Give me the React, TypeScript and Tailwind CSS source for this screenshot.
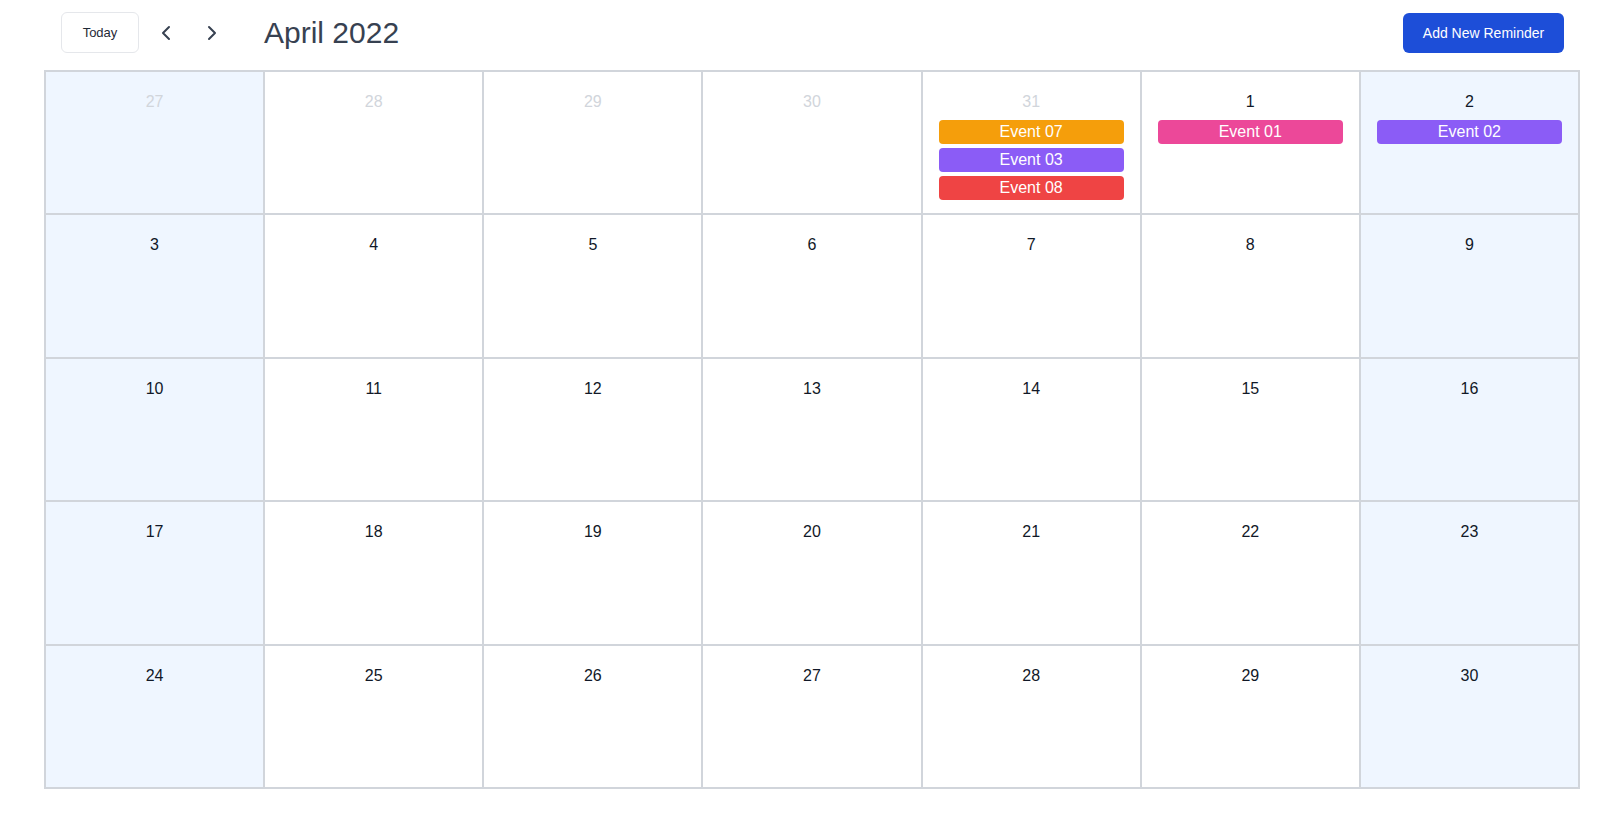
import { ChevronLeft, ChevronRight } from "lucide-react";

type CalEvent = { title: string; color: string };

type Day = {
  day: number;
  outside?: boolean;
  events?: CalEvent[];
};

const events: Record<string, CalEvent[]> = {
  "m31": [
    { title: "Event 07", color: "bg-[#f59e0b]" },
    { title: "Event 03", color: "bg-[#8b5cf6]" },
    { title: "Event 08", color: "bg-[#ef4444]" },
  ],
  "1": [{ title: "Event 01", color: "bg-[#ec4899]" }],
  "2": [{ title: "Event 02", color: "bg-[#8b5cf6]" }],
};

function buildDays(): Day[] {
  const days: Day[] = [];
  for (let d = 27; d <= 31; d++) {
    days.push({ day: d, outside: true, events: events["m" + d] });
  }
  for (let d = 1; d <= 30; d++) {
    days.push({ day: d, events: events[String(d)] });
  }
  return days;
}

function DayCell({ day, weekend }: { day: Day; weekend: boolean }) {
  return (
    <div
      className={`flex flex-col items-center border-r-2 border-b-2 border-[#d1d5db] px-4 pt-[18px] ${
        weekend ? "bg-[#eff6ff]" : "bg-white"
      }`}
    >
      <span className={`text-base leading-6 ${day.outside ? "text-[#d1d5db]" : "text-[#111827]"}`}>
        {day.day}
      </span>
      {day.events && (
        <div className="mt-[6px] flex w-full flex-col gap-1">
          {day.events.map((ev) => (
            <div
              key={ev.title}
              className={`h-6 rounded text-center text-base leading-6 text-white ${ev.color}`}
            >
              {ev.title}
            </div>
          ))}
        </div>
      )}
    </div>
  );
}

export default function App() {
  const days = buildDays();

  return (
    <div className="min-h-screen bg-white font-['Liberation_Sans',Arial,sans-serif]">
      <header className="flex items-center pl-[61px] pr-[49px] pt-3">
        <button
          type="button"
          className="h-[41px] w-[78px] rounded-md border border-gray-200 text-[13px] text-[#1f2937]"
        >
          Today
        </button>
        <button type="button" className="ml-[15px] text-[#374151]">
          <ChevronLeft className="h-6 w-6" strokeWidth={2} />
        </button>
        <button type="button" className="ml-[22px] text-[#374151]">
          <ChevronRight className="h-6 w-6" strokeWidth={2} />
        </button>
        <h1 className="ml-[40px] text-[30px] leading-9 text-[#374151]">April 2022</h1>
        <button
          type="button"
          className="ml-auto h-10 w-[161px] rounded-md bg-[#1d4ed8] text-sm text-white"
        >
          Add New Reminder
        </button>
      </header>

      <div className="ml-[44px] mt-[17px] grid h-[719px] w-[1536px] grid-cols-7 grid-rows-5 border-t-2 border-l-2 border-[#d1d5db]">
        {days.map((d, i) => (
          <DayCell key={i} day={d} weekend={i % 7 === 0 || i % 7 === 6} />
        ))}
      </div>
    </div>
  );
}
